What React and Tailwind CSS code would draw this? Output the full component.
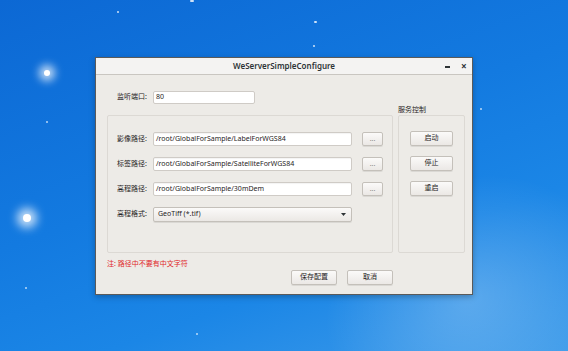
const cjk = { fontFamily: '"Noto Sans", "Noto Sans CJK SC", sans-serif' };

function Field({ value }) {
  return (
    <div className="flex h-[14px] w-[199px] items-center rounded-[2px] border border-[#cfcbc6] bg-white px-[2px] text-[7px] text-[#1f2324] shadow-[inset_0_1px_1px_rgba(0,0,0,0.05)]">
      {value}
    </div>
  );
}

function Btn({ children, className = "" }) {
  return (
    <div
      className={
        "flex items-center justify-center rounded-[2px] border border-[#c4c0ba] bg-gradient-to-b from-[#fbfaf9] to-[#ebe8e5] text-[7px] text-[#1f2324] shadow-[0_1px_0_rgba(0,0,0,0.08)] " +
        className
      }
    >
      {children}
    </div>
  );
}

function PathRow({ label, value }) {
  return (
    <div className="flex items-center">
      <div className="w-[36px] text-[7px] text-[#1f2324]">{label}</div>
      <Field value={value} />
      <Btn className="ml-[10px] h-[14px] w-[21px] text-[#888]">...</Btn>
    </div>
  );
}

export default function App() {
  return (
    <div
      className="relative h-[351px] w-[568px] overflow-hidden bg-[linear-gradient(160deg,#0c68d4_0%,#137ae0_45%,#1b86e6_70%,#3f9cea_100%)]"
      style={cjk}
    >
      {/* stars */}
      <div className="absolute left-[44px] top-[70px] h-[6px] w-[6px] rounded-full bg-white shadow-[0_0_9px_5px_rgba(255,255,255,0.75)]" />
      <div className="absolute left-[23px] top-[214px] h-[8px] w-[8px] rounded-full bg-white shadow-[0_0_10px_6px_rgba(255,255,255,0.75)]" />
      <div className="absolute left-[117px] top-[11px] h-[2px] w-[2px] rounded-full bg-white/80" />
      <div className="absolute left-[190px] top-[0px] h-[2px] w-[4px] rounded-full bg-white/80" />
      <div className="absolute left-[314px] top-[21px] h-[2px] w-[3px] rounded-full bg-white/80" />
      <div className="absolute left-[313px] top-[45px] h-[2px] w-[2px] rounded-full bg-white/80" />
      <div className="absolute left-[46px] top-[121px] h-[2px] w-[2px] rounded-full bg-white/70" />
      <div className="absolute left-[25px] top-[287px] h-[2px] w-[2px] rounded-full bg-white/70" />
      <div className="absolute left-[480px] top-[108px] h-[2px] w-[2px] rounded-full bg-white/70" />
      <div className="absolute left-[196px] top-[333px] h-[2px] w-[2px] rounded-full bg-white/70" />
      <div className="absolute -right-[60px] top-[170px] h-[260px] w-[320px] rotate-[-25deg] bg-[radial-gradient(ellipse_at_center,rgba(255,255,255,0.22),rgba(255,255,255,0)_65%)]" />

      {/* window */}
      <div className="absolute left-[95px] top-[57px] flex h-[238px] w-[378px] flex-col border border-[#5a5a5a] bg-[#edebe7] shadow-[0_2px_6px_rgba(0,0,0,0.25)]">
        <div className="relative flex h-[17px] items-center justify-center border-b border-[#c9c6c1] bg-[#f4f3f2]">
          <span className="text-[8px] font-semibold text-[#2e3436]">WeServerSimpleConfigure</span>
          <span className="absolute left-[349px] top-[8px] h-[1.5px] w-[5px] bg-[#2e3436]" />
          <span className="absolute left-[365px] top-[1px] text-[10px] font-bold leading-[14px] text-[#2e3436]">×</span>
        </div>

        <div className="flex flex-1 flex-col pl-[11px]">
          <div className="mt-[16px] flex items-center pl-[10px]">
            <div className="w-[36px] text-[7px] text-[#1f2324]">监听端口:</div>
            <div className="flex h-[13px] w-[102px] items-center rounded-[2px] border border-[#cfcbc6] bg-white px-[2px] text-[7px] text-[#1f2324]">
              80
            </div>
          </div>

          <div className="ml-[291px] mt-[1px] text-[7px] leading-[10px] text-[#1f2324]">服务控制</div>

          <div className="flex h-[138px] gap-[5px]">
            <div className="flex w-[286px] flex-col gap-[11px] rounded-[2px] border border-[#dcd9d4] pl-[9px] pt-[16px]">
              <PathRow label="影像路径:" value="/root/GlobalForSample/LabelForWGS84" />
              <PathRow label="标签路径:" value="/root/GlobalForSample/SatelliteForWGS84" />
              <PathRow label="高程路径:" value="/root/GlobalForSample/30mDem" />
              <div className="flex items-center">
                <div className="w-[36px] text-[7px] text-[#1f2324]">高程格式:</div>
                <Btn className="h-[15px] w-[199px] !justify-between pl-[4px] pr-[5px]">
                  <span>GeoTiff (*.tif)</span>
                  <svg width="5" height="3" viewBox="0 0 5 3">
                    <path d="M0 0h5L2.5 3z" fill="#2e3436" />
                  </svg>
                </Btn>
              </div>
            </div>
            <div className="flex w-[67px] flex-col items-center gap-[10px] rounded-[2px] border border-[#dcd9d4] pt-[15px]">
              <Btn className="h-[15px] w-[43px]">启动</Btn>
              <Btn className="h-[15px] w-[43px]">停止</Btn>
              <Btn className="h-[15px] w-[43px]">重启</Btn>
            </div>
          </div>

          <div className="mt-[5px] text-[7px] leading-[12px] text-[#e0282a]">注: 路径中不要有中文字符</div>

          <div className="ml-[184px] flex gap-[10px]">
            <Btn className="h-[15px] w-[46px]">保存配置</Btn>
            <Btn className="h-[15px] w-[46px]">取消</Btn>
          </div>
        </div>
      </div>
    </div>
  );
}
